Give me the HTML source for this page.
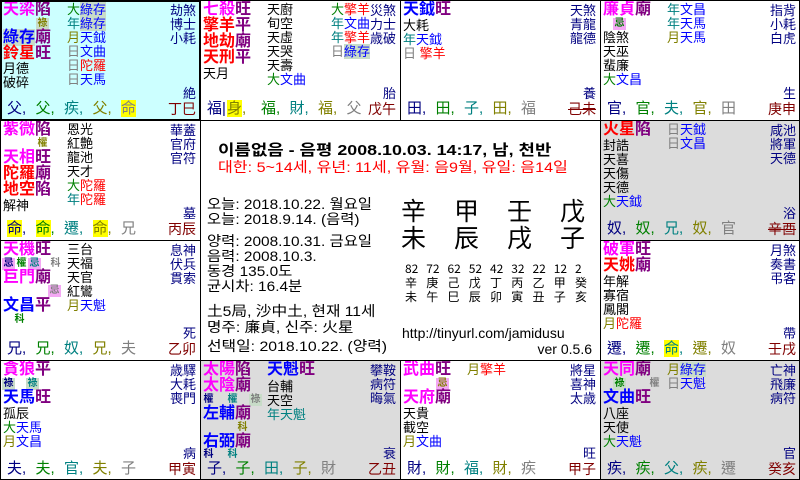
<!DOCTYPE html>
<html><head><meta charset="utf-8">
<style>
*{margin:0;padding:0;box-sizing:border-box}
body{width:800px;height:480px;position:relative;background:#fff;overflow:hidden;font-family:"Liberation Sans","Noto Sans CJK TC","WenQuanYi Zen Hei",sans-serif}
.c{position:absolute;width:200px;height:120px;overflow:hidden}
.c div{position:absolute;white-space:nowrap;line-height:15px}
.m{font-size:16px;font-weight:bold;left:3px;line-height:16px!important}
.n{font-size:13px;color:#000}
.r{right:4px;font-size:13px;color:#000080;text-align:right}
.b{left:7px;top:101px;font-size:15px}
.b span{display:inline-block;width:28.5px}
.st{right:4px;top:102px;font-size:14px;color:#800000}
.k{font-size:10px;line-height:12px!important;width:13px;height:12px;text-align:center;font-weight:bold}
.mg{color:#ff00ff}.pu{color:#800080}.rd{color:#f00}.bl{color:#00f}.nv{color:#000080}
.gr{color:#008000}.te{color:#008080}.ol{color:#808000}.gy{color:#808080}
.lb{background:#c8dcc8}.pk{background:#f4a8f4}.yl{background:#ff0}
.ln{position:absolute;background:#000}
.ctr{position:absolute;left:201px;top:121px;width:399px;height:239px;background:#fff;font-family:"Liberation Sans","Noto Sans CJK KR",sans-serif}
.ctr div{position:absolute;white-space:nowrap;transform-origin:left top}
.nm span{display:inline-block;width:21.25px}
</style></head><body>

<!-- Row 1 -->
<div class="c" style="left:0;top:0;background:#ccffff">
<div class="m" style="top:2px"><span class="mg">天梁</span><span class="pu">陷</span></div>
<div class="k ol lb" style="left:36px;top:18px">祿</div>
<div class="m" style="top:30px"><span class="bl lb">綠存</span><span class="pu">廟</span></div>
<div class="m" style="top:46px"><span class="rd">鈴星</span><span class="pu">旺</span></div>
<div class="n" style="left:3px;top:61px">月德</div>
<div class="n" style="left:3px;top:75px">破碎</div>
<div class="n" style="left:67px;top:2px"><span class="gr">大</span><span class="bl lb">綠存</span></div>
<div class="n" style="left:67px;top:16px"><span class="te">年</span><span class="bl lb">綠存</span></div>
<div class="n" style="left:67px;top:30px"><span class="ol">月</span><span class="bl">天鉞</span></div>
<div class="n" style="left:67px;top:44px"><span class="gy">日</span><span class="bl">文曲</span></div>
<div class="n" style="left:67px;top:58px"><span class="gy">日</span><span class="rd">陀羅</span></div>
<div class="n" style="left:67px;top:72px"><span class="gy">日</span><span class="bl">天馬</span></div>
<div class="r" style="top:3px">劫煞</div><div class="r" style="top:17px">博士</div><div class="r" style="top:31px">小耗</div>
<div class="r" style="top:86px">絶</div>
<div class="b"><span class="nv">父,</span><span class="gr">父,</span><span class="te">疾,</span><span class="ol">父,</span><span class="gy"><i class="yl" style="font-style:normal">命</i></span></div>
<div class="st">丁巳</div>
</div>

<div class="c" style="left:200px;top:0">
<div class="m" style="top:2px"><span class="mg">七殺</span><span class="pu">旺</span></div>
<div class="m" style="top:18px"><span class="rd">擎羊</span><span class="pu">平</span></div>
<div class="m" style="top:34px"><span class="rd">地劫</span><span class="pu">廟</span></div>
<div class="m" style="top:50px"><span class="rd">天刑</span><span class="pu">平</span></div>
<div class="n" style="left:3px;top:66px">天月</div>
<div class="n" style="left:67px;top:2px">天廚</div>
<div class="n" style="left:67px;top:16px">旬空</div>
<div class="n" style="left:67px;top:30px">天虛</div>
<div class="n" style="left:67px;top:44px">天哭</div>
<div class="n" style="left:67px;top:58px">天壽</div>
<div class="n" style="left:67px;top:72px"><span class="gr">大</span><span class="bl">文曲</span></div>
<div class="n" style="left:131px;top:2px"><span class="gr">大</span><span class="rd">擎羊</span></div>
<div class="n" style="left:131px;top:16px"><span class="te">年</span><span class="bl">文曲</span></div>
<div class="n" style="left:131px;top:30px"><span class="te">年</span><span class="rd">擎羊</span></div>
<div class="n" style="left:131px;top:44px"><span class="gy">日</span><span class="bl lb">綠存</span></div>
<div class="r" style="top:3px">災煞</div><div class="r" style="top:17px">力士</div><div class="r" style="top:31px">歳破</div>
<div class="r" style="top:86px">胎</div>
<div class="b"><span class="nv" style="width:20px">福|</span><span class="ol" style="width:34px"><i class="yl" style="font-style:normal">身</i>,</span><span class="gr">福,</span><span class="te">財,</span><span class="ol">福,</span><span class="gy">父</span></div>
<div class="st">戊午</div>
</div>

<div class="c" style="left:400px;top:0">
<div class="m" style="top:2px"><span class="bl">天鉞</span><span class="pu">旺</span></div>
<div class="n" style="left:3px;top:18px">大耗</div>
<div class="n" style="left:3px;top:32px"><span class="te">年</span><span class="bl">天鉞</span></div>
<div class="n" style="left:3px;top:46px"><span class="gy">日</span> <span class="rd">擎羊</span></div>
<div class="r" style="top:3px">天煞</div><div class="r" style="top:17px">青龍</div><div class="r" style="top:31px">龍德</div>
<div class="r" style="top:86px">養</div>
<div class="b"><span class="nv">田,</span><span class="gr">田,</span><span class="te">子,</span><span class="ol">田,</span><span class="gy">福</span></div>
<div class="st" style="text-decoration:line-through">己未</div>
</div>

<div class="c" style="left:600px;top:0">
<div class="m" style="top:2px"><span class="mg">廉貞</span><span class="pu">廟</span></div>
<div class="k gr pk" style="left:13px;top:18px">忌</div>
<div class="n" style="left:3px;top:30px">陰煞</div>
<div class="n" style="left:3px;top:44px">天巫</div>
<div class="n" style="left:3px;top:58px">蜚廉</div>
<div class="n" style="left:3px;top:72px"><span class="gr">大</span><span class="bl">文昌</span></div>
<div class="n" style="left:67px;top:2px"><span class="te">年</span><span class="bl">文昌</span></div>
<div class="n" style="left:67px;top:16px"><span class="te">年</span><span class="bl">天馬</span></div>
<div class="n" style="left:67px;top:30px"><span class="ol">月</span><span class="bl">天馬</span></div>
<div class="r" style="top:3px">指背</div><div class="r" style="top:17px">小耗</div><div class="r" style="top:31px">白虎</div>
<div class="r" style="top:86px">生</div>
<div class="b"><span class="nv">官,</span><span class="gr">官,</span><span class="te">夫,</span><span class="ol">官,</span><span class="gy">田</span></div>
<div class="st">庚申</div>
</div>

<!-- Row 2 -->
<div class="c" style="left:0;top:120px">
<div class="m" style="top:2px"><span class="mg">紫微</span><span class="pu">陷</span></div>
<div class="k ol" style="left:36px;top:18px">權</div>
<div class="m" style="top:30px"><span class="mg">天相</span><span class="pu">旺</span></div>
<div class="m" style="top:46px"><span class="rd">陀羅</span><span class="pu">廟</span></div>
<div class="m" style="top:62px"><span class="rd">地空</span><span class="pu">陷</span></div>
<div class="n" style="left:3px;top:78px">解神</div>
<div class="n" style="left:67px;top:2px">恩光</div>
<div class="n" style="left:67px;top:16px">紅艶</div>
<div class="n" style="left:67px;top:30px">龍池</div>
<div class="n" style="left:67px;top:44px">天才</div>
<div class="n" style="left:67px;top:58px"><span class="gr">大</span><span class="rd">陀羅</span></div>
<div class="n" style="left:67px;top:72px"><span class="te">年</span><span class="rd">陀羅</span></div>
<div class="r" style="top:3px">華蓋</div><div class="r" style="top:17px">官府</div><div class="r" style="top:31px">官符</div>
<div class="r" style="top:86px">墓</div>
<div class="b"><span class="nv"><i class="yl" style="font-style:normal">命</i>,</span><span class="gr"><i class="yl" style="font-style:normal">命</i>,</span><span class="te">遷,</span><span class="ol"><i class="yl" style="font-style:normal">命</i>,</span><span class="gy">兄</span></div>
<div class="st">丙辰</div>
</div>

<div class="c" style="left:600px;top:120px;background:#dcdcdc">
<div class="m" style="top:2px"><span class="rd">火星</span><span class="pu">陷</span></div>
<div class="n" style="left:3px;top:18px">封誥</div>
<div class="n" style="left:3px;top:32px">天喜</div>
<div class="n" style="left:3px;top:46px">天傷</div>
<div class="n" style="left:3px;top:60px">天德</div>
<div class="n" style="left:3px;top:74px"><span class="gr">大</span><span class="bl">天鉞</span></div>
<div class="n" style="left:67px;top:2px"><span class="gy">日</span><span class="bl">天鉞</span></div>
<div class="n" style="left:67px;top:16px"><span class="gy">日</span><span class="bl">文昌</span></div>
<div class="r" style="top:3px">咸池</div><div class="r" style="top:17px">將軍</div><div class="r" style="top:31px">天德</div>
<div class="r" style="top:86px">浴</div>
<div class="b"><span class="nv">奴,</span><span class="gr">奴,</span><span class="te">兄,</span><span class="ol">奴,</span><span class="gy">官</span></div>
<div class="st" style="text-decoration:line-through">辛酉</div>
</div>

<!-- Row 3 -->
<div class="c" style="left:0;top:240px">
<div class="m" style="top:2px"><span class="mg">天機</span><span class="pu">旺</span></div>
<div class="k nv pk" style="left:2px;top:18px">忌</div>
<div class="k gr" style="left:15px;top:18px">權</div>
<div class="k te pk" style="left:28px;top:18px">忌</div>
<div class="k gy" style="left:49px;top:18px">科</div>
<div class="m" style="top:30px"><span class="mg">巨門</span><span class="pu">廟</span></div>
<div class="k gy pk" style="left:48px;top:45px">忌</div>
<div class="m" style="top:58px"><span class="bl">文昌</span><span class="pu">平</span></div>
<div class="k gr" style="left:13px;top:74px">科</div>
<div class="n" style="left:67px;top:2px">三台</div>
<div class="n" style="left:67px;top:16px">天福</div>
<div class="n" style="left:67px;top:30px">天官</div>
<div class="n" style="left:67px;top:44px">紅鸞</div>
<div class="n" style="left:67px;top:58px"><span class="ol">月</span><span class="bl">天魁</span></div>
<div class="r" style="top:3px">息神</div><div class="r" style="top:17px">伏兵</div><div class="r" style="top:31px">貫索</div>
<div class="r" style="top:86px">死</div>
<div class="b"><span class="nv">兄,</span><span class="gr">兄,</span><span class="te">奴,</span><span class="ol">兄,</span><span class="gy">夫</span></div>
<div class="st">乙卯</div>
</div>

<div class="c" style="left:600px;top:240px">
<div class="m" style="top:2px"><span class="mg">破軍</span><span class="pu">旺</span></div>
<div class="m" style="top:18px"><span class="rd">天姚</span><span class="pu">廟</span></div>
<div class="n" style="left:3px;top:34px">年解</div>
<div class="n" style="left:3px;top:48px">寡宿</div>
<div class="n" style="left:3px;top:62px">鳳閣</div>
<div class="n" style="left:3px;top:76px"><span class="ol">月</span><span class="rd">陀羅</span></div>
<div class="r" style="top:3px">月煞</div><div class="r" style="top:17px">奏書</div><div class="r" style="top:31px">弔客</div>
<div class="r" style="top:86px">帶</div>
<div class="b"><span class="nv">遷,</span><span class="gr">遷,</span><span class="te"><i class="yl" style="font-style:normal">命</i>,</span><span class="ol">遷,</span><span class="gy">奴</span></div>
<div class="st">壬戌</div>
</div>

<!-- Row 4 -->
<div class="c" style="left:0;top:360px">
<div class="m" style="top:2px"><span class="mg">貪狼</span><span class="pu">平</span></div>
<div class="k nv lb" style="left:2px;top:18px">祿</div>
<div class="k te lb" style="left:26px;top:18px">祿</div>
<div class="m" style="top:30px"><span class="bl">天馬</span><span class="pu">旺</span></div>
<div class="n" style="left:3px;top:46px">孤辰</div>
<div class="n" style="left:3px;top:60px"><span class="gr">大</span><span class="bl">天馬</span></div>
<div class="n" style="left:3px;top:74px"><span class="ol">月</span><span class="bl">文昌</span></div>
<div class="r" style="top:3px">歳驛</div><div class="r" style="top:17px">大耗</div><div class="r" style="top:31px">喪門</div>
<div class="r" style="top:86px">病</div>
<div class="b"><span class="nv">夫,</span><span class="gr">夫,</span><span class="te">官,</span><span class="ol">夫,</span><span class="gy">子</span></div>
<div class="st">甲寅</div>
</div>

<div class="c" style="left:200px;top:360px;background:#dcdcdc">
<div class="m" style="top:2px"><span class="mg">太陽</span><span class="pu">陷</span></div>
<div class="m" style="top:18px"><span class="mg">太陰</span><span class="pu">廟</span></div>
<div class="k nv" style="left:2px;top:34px">權</div>
<div class="k te" style="left:26px;top:34px">權</div>
<div class="k gy lb" style="left:49px;top:34px">祿</div>
<div class="m" style="top:46px"><span class="bl">左輔</span><span class="pu">廟</span></div>
<div class="k ol" style="left:36px;top:62px">科</div>
<div class="m" style="top:74px"><span class="bl">右弼</span><span class="pu">廟</span></div>
<div class="k nv" style="left:2px;top:89px">科</div>
<div class="k te" style="left:26px;top:89px">科</div>
<div class="m" style="top:2px;left:67px"><span class="bl">天魁</span><span class="pu">旺</span></div>
<div class="n" style="left:67px;top:19px">台輔</div>
<div class="n" style="left:67px;top:33px">天空</div>
<div class="n" style="left:67px;top:47px"><span class="te">年天魁</span></div>
<div class="r" style="top:3px">攀鞍</div><div class="r" style="top:17px">病符</div><div class="r" style="top:31px">晦氣</div>
<div class="r" style="top:86px">衰</div>
<div class="b"><span class="nv">子,</span><span class="gr">子,</span><span class="te">田,</span><span class="ol">子,</span><span class="gy">財</span></div>
<div class="st">乙丑</div>
</div>

<div class="c" style="left:400px;top:360px">
<div class="m" style="top:2px"><span class="mg">武曲</span><span class="pu">旺</span></div>
<div class="k ol pk" style="left:36px;top:18px">忌</div>
<div class="m" style="top:30px"><span class="mg">天府</span><span class="pu">廟</span></div>
<div class="n" style="left:3px;top:46px">天貴</div>
<div class="n" style="left:3px;top:60px">截空</div>
<div class="n" style="left:3px;top:74px"><span class="ol">月</span><span class="bl">文曲</span></div>
<div class="n" style="left:67px;top:2px"><span class="ol">月</span><span class="rd">擎羊</span></div>
<div class="r" style="top:3px">將星</div><div class="r" style="top:17px">喜神</div><div class="r" style="top:31px">太歳</div>
<div class="r" style="top:86px">旺</div>
<div class="b"><span class="nv">財,</span><span class="gr">財,</span><span class="te">福,</span><span class="ol">財,</span><span class="gy">疾</span></div>
<div class="st">甲子</div>
</div>

<div class="c" style="left:600px;top:360px;background:#dcdcdc">
<div class="m" style="top:2px"><span class="mg">天同</span><span class="pu">廟</span></div>
<div class="k gr lb" style="left:13px;top:18px">祿</div>
<div class="k gy" style="left:48px;top:18px">權</div>
<div class="m" style="top:30px"><span class="bl">文曲</span><span class="pu">旺</span></div>
<div class="n" style="left:3px;top:46px">八座</div>
<div class="n" style="left:3px;top:60px">天使</div>
<div class="n" style="left:3px;top:74px"><span class="gr">大</span><span class="bl">天魁</span></div>
<div class="n" style="left:67px;top:2px"><span class="ol">月</span><span class="bl lb">綠存</span></div>
<div class="n" style="left:67px;top:16px"><span class="gy">日</span><span class="bl">天魁</span></div>
<div class="r" style="top:3px">亡神</div><div class="r" style="top:17px">飛廉</div><div class="r" style="top:31px">病符</div>
<div class="r" style="top:86px">官</div>
<div class="b"><span class="nv">疾,</span><span class="gr">疾,</span><span class="te">父,</span><span class="ol">疾,</span><span class="gy">遷</span></div>
<div class="st">癸亥</div>
</div>

<!-- Center -->
<div class="ctr">
<div style="left:17px;top:22px;font-size:15px;font-weight:bold;line-height:16px;transform:scaleX(1.19)">이름없음 - 음평 2008.10.03. 14:17, 남, 천반</div>
<div style="left:17px;top:38px;font-size:14px;color:#f00;line-height:16px;transform:scaleX(1.15)">대한: 5~14세, 유년: 11세, 유월: 음9월, 유일: 음14일</div>
<div style="left:6px;top:76px;font-size:14px;line-height:15px;transform:scaleX(1.1)">오늘: 2018.10.22. 월요일<br>오늘: 2018.9.14. (음력)</div>
<div style="left:6px;top:113px;font-size:14px;line-height:15px;transform:scaleX(1.1)">양력: 2008.10.31. 금요일<br>음력: 2008.10.3.<br>동경 135.0도<br>균시차: 16.4분</div>
<div style="left:6px;top:183px;font-size:14px;line-height:15.5px;transform:scaleX(1.12)">土5局, 沙中土, 현재 11세<br>명주: 廉貞, 신주: 火星</div>
<div style="left:6px;top:218px;font-size:14px;line-height:15px;transform:scaleX(1.13)">선택일: 2018.10.22. (양력)</div>
<div style="left:200px;top:76px;font-size:25px;line-height:27px;font-family:'Noto Sans CJK TC',sans-serif;letter-spacing:28px">辛甲壬戊<br>未辰戌子</div>
<div class="nm" style="left:204px;top:141px;font-size:12px;line-height:14px;font-family:'Noto Sans CJK TC',sans-serif">
<span>82</span><span>72</span><span>62</span><span>52</span><span>42</span><span>32</span><span>22</span><span>12</span><span>2</span><br>
<span>辛</span><span>庚</span><span>己</span><span>戊</span><span>丁</span><span>丙</span><span>乙</span><span>甲</span><span>癸</span><br>
<span>未</span><span>午</span><span>巳</span><span>辰</span><span>卯</span><span>寅</span><span>丑</span><span>子</span><span>亥</span></div>
<div style="left:201px;top:204px;font-size:14px;line-height:16px">http://tinyurl.com/jamidusu</div>
<div style="right:8px;top:220px;font-size:14px;line-height:16px">ver 0.5.6</div>
</div>

<!-- Grid lines -->
<div class="ln" style="left:0;top:0;width:800px;height:1px"></div>
<div class="ln" style="left:0;top:479px;width:800px;height:1px"></div>
<div class="ln" style="left:0;top:0;width:1px;height:480px"></div>
<div class="ln" style="left:799px;top:0;width:1px;height:480px"></div>
<div class="ln" style="left:0;top:120px;width:800px;height:1px"></div>
<div class="ln" style="left:0;top:240px;width:200px;height:1px"></div>
<div class="ln" style="left:600px;top:240px;width:200px;height:1px"></div>
<div class="ln" style="left:0;top:360px;width:800px;height:1px"></div>
<div class="ln" style="left:200px;top:0;width:1px;height:480px"></div>
<div class="ln" style="left:400px;top:0;width:1px;height:120px"></div>
<div class="ln" style="left:400px;top:360px;width:1px;height:120px"></div>
<div class="ln" style="left:600px;top:0;width:1px;height:480px"></div>
<div class="ln" style="left:0;top:0;width:201px;height:2px"></div>
<div class="ln" style="left:0;top:119px;width:201px;height:2px"></div>
<div class="ln" style="left:0;top:0;width:2px;height:121px"></div>
<div class="ln" style="left:199px;top:0;width:2px;height:121px"></div>
</body></html>
